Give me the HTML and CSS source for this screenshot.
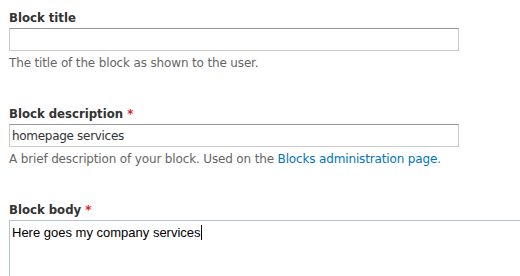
FILE: index.html
```html
<!DOCTYPE html>
<html>
<head>
  <meta charset="utf-8" />
  <title>Block</title>
  <link rel="stylesheet" href="styles.css">
</head>
<body>
  <form class="block-form">
    <div class="form-item">
      <label for="title">Block title</label>
      <input type="text" id="title" class="form-text">
      <div class="description">The title of the block as shown to the user.</div>
    </div>

    <div class="form-item">
      <label for="info">Block description <span class="form-required">*</span></label>
      <input type="text" id="info" class="form-text" value="homepage services">
      <div class="description">A brief description of your block. Used on the <a href="#">Blocks administration page</a>.</div>
    </div>

    <div class="form-item">
      <label for="body">Block body <span class="form-required">*</span></label>
      <div class="form-textarea">Here goes my company services<span class="caret"></span></div>
    </div>
  </form>
</body>
</html>
```

FILE: styles.css
```css
body {
  margin: 0;
  padding: 0;
  background: #fff;
  font-family: "DejaVu Sans", Verdana, sans-serif;
  color: #333;
  overflow: hidden;
  height: 276px;
}

.block-form {
  padding: 10px 0 0 9px;
}

.form-item {
  margin-bottom: 35px;
}

.form-item label {
  display: block;
  font-family: "DejaVu Sans Condensed", "DejaVu Sans", sans-serif;
  font-size: 13px;
  line-height: 16px;
  font-weight: bold;
  color: #333;
  margin-bottom: 2px;
}

.form-required {
  color: #e31a1a;
}

.form-text {
  display: block;
  box-sizing: border-box;
  width: 450px;
  height: 23px;
  margin: 0;
  padding: 2px 2px;
  border: 1px solid #ccc;
  border-top-color: #999;
  font-family: "DejaVu Sans", Verdana, sans-serif;
  font-size: 12px;
  letter-spacing: -0.3px;
  color: #333;
}

.description {
  font-size: 12px;
  line-height: 16px;
  letter-spacing: -0.15px;
  color: #666;
  margin-top: 4px;
}

.description a {
  color: #0074bd;
  text-decoration: none;
}

.form-textarea {
  box-sizing: border-box;
  width: 530px;
  height: 60px;
  border: 1px solid #b4c6d6;
  padding: 4px 2px;
  font-family: "Liberation Sans", Arial, sans-serif;
  font-size: 13px;
  line-height: 16px;
  color: #000;
}

.caret {
  display: inline-block;
  width: 1px;
  height: 15px;
  background: #000;
  vertical-align: -3px;
}
```
